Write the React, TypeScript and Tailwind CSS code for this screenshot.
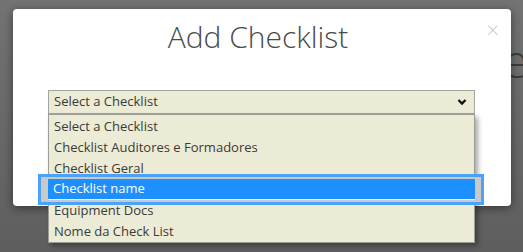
import React from "react";

const options = [
  "Select a Checklist",
  "Checklist Auditores e Formadores",
  "Checklist Geral",
  "Checklist name",
  "Equipment Docs",
  "Nome da Check List",
];

const selectedIndex = 3;

function Chevron() {
  return (
    <svg width="10" height="8" viewBox="0 0 10 8" className="block">
      <polyline points="1.5,2 5,5.5 8.5,2" fill="none" stroke="#111" strokeWidth="2.4" />
    </svg>
  );
}

export default function App() {
  return (
    <div
      className="relative h-[252px] w-[523px] overflow-hidden bg-gradient-to-b from-[#737373] to-[#5e5e5e]"
      style={{ fontFamily: '"Open Sans", "Noto Sans", sans-serif' }}
    >
      {/* page behind the overlay */}
      <span className="absolute left-[503px] top-[37px] text-[46px] font-light leading-none text-[#3c3c3c]">e</span>

      <div className="pl-[13px] pt-[9px]">
        <div className="relative h-[197px] w-[498px] rounded-[4px] bg-white shadow-[0_2px_10px_rgba(0,0,0,0.45)]">
          <button className="absolute right-[12px] top-[9px] text-[22px] font-light leading-none text-[#c9c9c9]">
            ×
          </button>

          <h1 className="pr-[8px] pt-[13px] text-center text-[30px] font-light leading-none text-[#4a4a4a]">Add Checklist</h1>

          <div className="relative ml-[35px] mt-[38px] w-[427px] text-[13px] text-[#3a3a3a]">
            <div className="flex h-[24px] items-center justify-between border border-[#a6a6a0] bg-[#ecebd5] pl-[5px] pr-[7px]">
              <span>Select a Checklist</span>
              <Chevron />
            </div>

            <ul className="absolute left-0 top-[24px] z-10 w-[427px] border border-[#9c9c98] bg-[#ecebd5] pt-px shadow-[3px_3px_5px_rgba(0,0,0,0.35)]">
              {options.map((option, index) =>
                index === selectedIndex ? (
                  <li key={option} className="relative h-[21px]">
                    <div className="absolute -left-[11px] -right-[10px] -top-[5px] -bottom-[5px] border-[3px] border-[#4aa2fb] bg-[#c9c9c9]" />
                    <div className="absolute -left-px -right-px top-0 flex h-[21px] items-center border-b border-[#f0f0f0] bg-[#1e8fff] pl-[5px] text-white">
                      {option}
                    </div>
                  </li>
                ) : (
                  <li key={option} className="flex h-[21px] items-center pl-[5px]">
                    {option}
                  </li>
                )
              )}
            </ul>
          </div>
        </div>
      </div>
    </div>
  );
}
